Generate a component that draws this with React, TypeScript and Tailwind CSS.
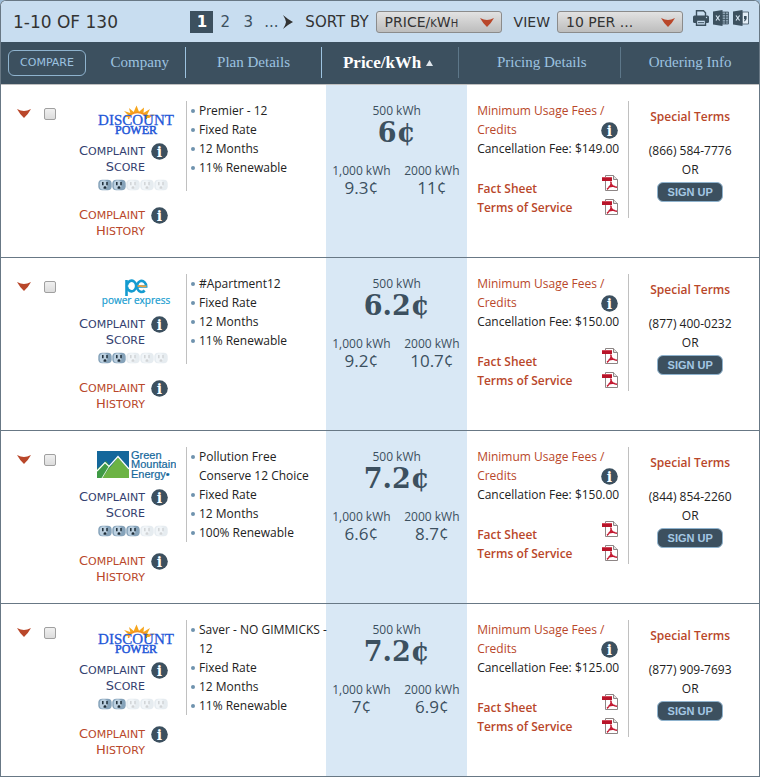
import React, { useState } from 'react';

type Brand = 'discount' | 'express' | 'green';

interface Plan {
  id: string;
  brand: Brand;
  score: number;
  details: string[];
  price500: string;
  price1000: string;
  price2000: string;
  fee: string;
  phone: string;
}

const plans: Plan[] = [
  { id: 'p1', brand: 'discount', score: 2, details: ['Premier - 12', 'Fixed Rate', '12 Months', '11% Renewable'], price500: '6¢', price1000: '9.3¢', price2000: '11¢', fee: '$149.00', phone: '(866) 584-7776' },
  { id: 'p2', brand: 'express', score: 2, details: ['#Apartment12', 'Fixed Rate', '12 Months', '11% Renewable'], price500: '6.2¢', price1000: '9.2¢', price2000: '10.7¢', fee: '$150.00', phone: '(877) 400-0232' },
  { id: 'p3', brand: 'green', score: 3, details: ['Pollution Free Conserve 12 Choice', 'Fixed Rate', '12 Months', '100% Renewable'], price500: '7.2¢', price1000: '6.6¢', price2000: '8.7¢', fee: '$150.00', phone: '(844) 854-2260' },
  { id: 'p4', brand: 'discount', score: 2, details: ['Saver - NO GIMMICKS - 12', 'Fixed Rate', '12 Months', '11% Renewable'], price500: '7.2¢', price1000: '7¢', price2000: '6.9¢', fee: '$125.00', phone: '(877) 909-7693' }
];

const Chevron = ({ className = '' }: { className?: string }) => (
  <svg viewBox="0 0 14 9" className={`w-[14px] h-[9px] ${className}`} aria-hidden="true">
    <path d="M0 0 Q4 2 7 2 Q10 2 14 0 Q11 5.500 7 9 Q3 5.500 0 0Z" fill="#b9472a" />
  </svg>
);

const InfoIcon = () => (
  <svg viewBox="0 0 17 17" className="w-[17px] h-[17px] shrink-0" aria-hidden="true">
    <circle cx="8.500" cy="8.500" r="8.300" fill="#3c505f" />
    <text x="8.500" y="13.500" textAnchor="middle" fontFamily="DejaVu Serif, serif" fontWeight="bold" fontSize="14" fill="#fff">i</text>
  </svg>
);

const PdfIcon = () => (
  <svg viewBox="0 0 16 16" className="w-4 h-4" aria-hidden="true">
    <path d="M3.500 .5h8l4 4v11h-12z" fill="#fff" stroke="#8d8585" />
    <path d="M11.500 .5v4h4" fill="#e4e0e0" stroke="#8d8585" />
    <path d="M0 2h10v4H0z" fill="#b8152a" />
    <path d="M0 2h10v1H0z" fill="#d2495a" />
    <path d="M8.500 6.500C10 8 9 11 5 14.300M9 8.500c.8 2.300 2.800 3.500 6 3.800M6.500 12.200c2-1 4.500-1.200 6.500-.8" fill="none" stroke="#c31830" strokeWidth="1.500" />
  </svg>
);

const Outlet = ({ active }: { active: boolean }) => (
  <svg viewBox="0 0 14 12" className={`w-[14px] h-3 ${active ? '' : 'opacity-20'}`} aria-hidden="true">
    <rect x=".3" y=".8" width="13.400" height="10.400" rx="4" fill="#86a3ba" />
    <rect x="1.800" y="1.200" width="7.500" height="9.600" rx="3.500" fill="#bcd0e0" />
    <path d="M4.800 3v3.200M9 3v3.200" stroke="#1d2c38" strokeWidth="1.500" />
    <path d="M5.600 9.800V8.600a1.400 1.400 0 0 1 2.800 0v1.200z" fill="#1d2c38" />
  </svg>
);

const DiscountLogo = () => (
  <svg viewBox="0 0 80 32" className="w-20 h-8" role="img" aria-label="Discount Power">
    <path d="M27.500 12l5-1.500L28 6l6.300 2L33 3l4.700 4L40.500 .5 43 6.800 48 2.500 47.500 8 54 4 51 10l8-.5-6 3.500z" fill="#f6a51c" />
    <path d="M32.500 14a9 6.500 0 0 1 18 0z" fill="#fff" />
    <path d="M32.500 14a9 6.500 0 0 1 18 0" fill="none" stroke="#f4921e" strokeWidth="1.500" />
    <text x="40" y="20" textAnchor="middle" fontFamily="Liberation Serif, serif" fontSize="15" fill="#1f57d8" stroke="#1f57d8" strokeWidth=".3">DISCOUNT</text>
    <text x="40" y="29" textAnchor="middle" fontFamily="Liberation Serif, serif" fontSize="12" fill="#1f57d8" stroke="#1f57d8" strokeWidth=".5">POWER</text>
  </svg>
);

const ExpressLogo = () => (
  <svg viewBox="0 0 80 32" className="w-20 h-8" role="img" aria-label="Power Express">
    <g fill="none" stroke="#149bd0" strokeWidth="2.600">
      <path d="M30.500 18V2" />
      <path d="M31 7.500a4.600 5.300 0 1 1 0 1" />
      <path d="M41.500 8.500h8.700a4.600 5.500 0 1 0-1.500 4" />
    </g>
    <path d="M41.500 8.300c3-1.600 5 1 9-.3" fill="none" stroke="#f3a33c" strokeWidth="1.800" />
    <text x="40" y="26" textAnchor="middle" fontFamily="Open Sans, sans-serif" fontSize="10" fill="#149bd0" stroke="#149bd0" strokeWidth=".2">power express</text>
  </svg>
);

const GreenLogo = () => (
  <svg viewBox="0 0 80 32" className="w-20 h-8" role="img" aria-label="Green Mountain Energy">
    <rect x="1" y="0" width="32" height="27" fill="#14679b" />
    <path d="M1 18L10 10l8 10v7H1z" fill="#3f9a45" />
    <path d="M6 27L22 6l11 13v8z" fill="#6cb344" />
    <path d="M1 20l8-8.500 4 4L22 5.500 33 18" fill="none" stroke="#fff" strokeWidth="1.200" />
    <path d="M13 15.500L6 27" stroke="#fff" strokeWidth=".8" />
    <g fontFamily="Liberation Sans, sans-serif" fontSize="11" fill="#14679b" stroke="#14679b" strokeWidth=".2">
      <text x="35" y="8">Green</text>
      <text x="35" y="17">Mountain</text>
      <text x="35" y="27">Energy•</text>
    </g>
  </svg>
);

const logos: Record<Brand, React.FC> = {
  discount: DiscountLogo,
  express: ExpressLogo,
  green: GreenLogo
};

const PrintIcon = () => (
  <svg viewBox="0 0 16 16" className="w-4 h-4" aria-hidden="true">
    <path d="M3.500 6V.8h7l2 2V6" fill="#c8ddf0" stroke="#3c505f" strokeWidth="1.400" />
    <rect x="0" y="5.500" width="16" height="7.500" rx="1.500" fill="#3c505f" />
    <path d="M3.500 10h9v5.300h-9z" fill="#c8ddf0" stroke="#3c505f" strokeWidth="1.400" />
    <path d="M5 12.700h6" stroke="#3c505f" />
    <circle cx="13.500" cy="7.500" r=".7" fill="#c8ddf0" />
  </svg>
);

const SheetIcon = ({ csv = false }: { csv?: boolean }) => (
  <svg viewBox="0 0 16 16" className="w-4 h-4" aria-hidden="true">
    <path d="M9 2h6.500v12H9z" fill={csv ? '#e4eef8' : '#8ba0b1'} stroke="#3c505f" strokeWidth=".8" />
    {csv ? (
      <path d="M11 6h2.600v3l-1.600 2.200h-1L11.800 9H11z" fill="#3c505f" />
    ) : (
      <path d="M9 4.500h6.500M9 7h6.500M9 9.500h6.500M9 12h6.500M12.500 2v12" stroke="#3c505f" strokeWidth=".8" />
    )}
    <path d="M0 1.500L9.500 0v16L0 14.500z" fill="#3c505f" />
    <path d="M3 5.500l3.600 5M6.600 5.500L3 10.500" stroke="#d5e4f1" strokeWidth="1.200" />
  </svg>
);

const Dropdown = ({ id, options }: { id: string; options: string[] }) => (
  <div className="relative w-[126px]">
    <select
      id={id}
      className="appearance-none w-full h-[22px] pl-2 pr-8 rounded-[3px] border border-[#8b8b8b] bg-linear-to-b from-[#e2e2e2] to-[#bdbdbd] text-sm leading-5 text-[#333] [font-variant:small-caps]"
    >
      {options.map(option => (
        <option key={option}>{option}</option>
      ))}
    </select>
    <Chevron className="absolute right-2 top-[7px] pointer-events-none" />
  </div>
);

const Toolbar = () => (
  <div className="flex items-center h-[41px] pl-3 pr-[10px] bg-[#c8ddf0] font-['DejaVu_Sans',sans-serif] text-[#333]">
    <span className="text-[17px] leading-5">1-10 OF 130</span>
    <nav className="flex items-center ml-auto text-[15px] leading-5 text-[#3c505f]" aria-label="Pages">
      <a href="#page-1" className="flex items-center justify-center w-[23px] h-[22px] bg-[#3c505f] font-bold text-white">1</a>
      <a href="#page-2" className="w-6 text-center">2</a>
      <a href="#page-3" className="w-[22px] text-center">3</a>
      <span className="w-6 text-center">...</span>
      <a href="#next" aria-label="Next page">
        <svg viewBox="0 0 10 14" className="w-[10px] h-[14px]" aria-hidden="true">
          <path d="M0 0Q5 4.500 10 7Q5 9.500 0 14Q2.800 9.500 3 7Q2.800 4.500 0 0Z" fill="#333" />
        </svg>
      </a>
    </nav>
    <label htmlFor="sort" className="ml-3 mr-[7px] text-[15px] leading-5">SORT BY</label>
    <Dropdown id="sort" options={['PRICE/kWh', 'COMPANY']} />
    <label htmlFor="view" className="ml-3 mr-[7px] text-sm leading-5">VIEW</label>
    <Dropdown id="view" options={['10 PER ...', '20 PER ...']} />
    <div className="flex gap-1 ml-[10px] mb-2">
      <button aria-label="Print"><PrintIcon /></button>
      <button aria-label="Export to Excel"><SheetIcon /></button>
      <button aria-label="Export to CSV"><SheetIcon csv /></button>
    </div>
  </div>
);

// Two stacked words in capitals, each with a larger initial
const CapsLabel = ({ words }: { words: string[] }) => (
  <span className="block text-right text-[11px] leading-4 font-['DejaVu_Sans',sans-serif] uppercase whitespace-nowrap">
    {words.map(word => (
      <span key={word} className="block h-4 first-letter:text-[13px]">{word}</span>
    ))}
  </span>
);

const PlanRow = ({ plan }: { plan: Plan }) => {
  const [open, setOpen] = useState(false);
  const Logo = logos[plan.brand];

  return (
    <tr className="h-[173px] border-b border-[#687885] align-top">
      <td className="pt-[23px] pl-4">
        <div className="flex items-center gap-[13px]">
          <button aria-label="Show details" aria-expanded={open} onClick={() => setOpen(!open)}>
            <Chevron />
          </button>
          <input
            type="checkbox"
            aria-label={`Compare ${plan.details[0]}`}
            className="appearance-none w-3 h-3 rounded-[2px] border border-[#a0a0a0] bg-linear-to-b from-[#f0f0f0] to-[#dcdcdc] checked:bg-[#3c505f]"
          />
        </div>
      </td>

      {/* Company */}
      <td className="pt-5 pr-[18px]">
        <div className="flex flex-col items-end">
          <div className="-mr-2"><Logo /></div>
          <div className="flex gap-[6px] mt-[6px] text-[#33406f]">
            <CapsLabel words={['Complaint', 'Score']} />
            <InfoIcon />
          </div>
          <div className="flex mt-1" role="img" aria-label={`Score ${plan.score} of 5`}>
            {[1, 2, 3, 4, 5].map(n => (
              <Outlet key={n} active={n <= plan.score} />
            ))}
          </div>
          <a href="#history" className="flex gap-[6px] mt-4 text-[#b9472a]">
            <CapsLabel words={['Complaint', 'History']} />
            <InfoIcon />
          </a>
        </div>
      </td>

      {/* Plan details */}
      <td className="pt-4">
        <ul className="min-h-[90px] pl-1 -mr-0.5 border-l border-[#c0c0c0] text-[#222]">
          {plan.details.map(detail => (
            <li key={detail} className="flex gap-1">
              <span className="w-1 h-1 mt-2 rounded-full bg-[#6f93ae] shrink-0" />
              <span>{detail}</span>
            </li>
          ))}
        </ul>
      </td>

      {/* Price */}
      <td className="pt-4 bg-[#d9e8f5] text-center text-[#3c505f]">
        <div>500 kWh</div>
        <div className="font-['DejaVu_Serif',serif] font-bold text-[27px] leading-[26px]">{plan.price500}</div>
        <div className="grid grid-cols-2 mt-[15px]">
          <div>
            <div>1,000 kWh</div>
            <div className="font-medium text-[17px] leading-4">{plan.price1000}</div>
          </div>
          <div>
            <div>2000 kWh</div>
            <div className="font-medium text-[17px] leading-4">{plan.price2000}</div>
          </div>
        </div>
      </td>

      {/* Pricing details */}
      <td className="pt-4">
        <div className="min-h-[117px] px-[10px] border-r border-[#c0c0c0] text-[#b9472a]">
          <a href="#fees" className="flex items-end justify-between">
            <span>Minimum Usage Fees /<br />Credits</span>
            <span className="-ml-5"><InfoIcon /></span>
          </a>
          <div className="text-[#222] whitespace-nowrap">Cancellation Fee: {plan.fee}</div>
          <div className="flex justify-between mt-[17px] font-semibold">
            <div className="flex flex-col pt-1">
              <a href="#facts">Fact Sheet</a>
              <a href="#terms">Terms of Service</a>
            </div>
            <div className="flex flex-col gap-2">
              <a href="#facts-pdf" aria-label="Fact Sheet PDF"><PdfIcon /></a>
              <a href="#terms-pdf" aria-label="Terms of Service PDF"><PdfIcon /></a>
            </div>
          </div>
        </div>
      </td>

      {/* Ordering */}
      <td className="pt-[22px] pr-2 text-center text-[#222]">
        <a href="#special" className="block font-semibold text-[#b9472a]">Special Terms</a>
        <div className="mt-[15px]">{plan.phone}<br />OR</div>
        <button className="w-[66px] h-5 mt-[3px] rounded-md border border-[#8fb3ce] bg-[#3c505f] font-['Liberation_Sans',sans-serif] font-bold text-[11px] leading-4 text-[#a5c8e4]">
          SIGN UP
        </button>
      </td>
    </tr>
  );
};

const heading = 'flex items-center justify-center h-[31px]';

export default function App() {
  return (
    <div className="bg-[#9dbbd6]">
      <div className="rounded-t-md overflow-hidden border border-b-0 border-[#687885] bg-white font-['Open_Sans',sans-serif] text-xs leading-[19px]">
        <Toolbar />
        <table className="w-full table-fixed">
          <colgroup>
            <col className="w-[11.3%]" />
            <col className="w-[13.1%]" />
            <col className="w-[18.5%]" />
            <col className="w-[18.6%]" />
            <col className="w-[21.4%]" />
            <col className="w-[17.1%]" />
          </colgroup>
          <thead>
            <tr className="h-[42px] border-b border-[#c0c0c0] bg-[#3c505f] font-['Liberation_Serif',serif] text-[15px] text-[#9dc3e0]">
              <th className="pl-[7px] text-left font-normal">
                <button className="w-[78px] h-[26px] rounded-md border border-[#8fb3ce] font-['DejaVu_Sans',sans-serif] text-[11px] leading-4">COMPARE</button>
              </th>
              <th className="font-normal"><div className={`${heading} pl-2 border-r border-[#9dc3e0]`}>Company</div></th>
              <th className="pr-1 font-normal"><div className={`${heading} border-r border-[#9dc3e0]`}>Plan Details</div></th>
              <th className="pr-2 font-bold text-[17px] text-white" aria-sort="ascending">
                <div className={`${heading} gap-[5px] pr-2 border-r border-[#5d7789]`}>
                  Price/kWh
                  <svg viewBox="0 0 7 6" className="w-[7px] h-[6px]" aria-hidden="true"><path d="M3.500 0L7 6H0z" fill="#dfe6ec" /></svg>
                </div>
              </th>
              <th className="pr-2 font-normal"><div className={`${heading} pr-1 border-r border-[#5d7789]`}>Pricing Details</div></th>
              <th className="pr-2 font-normal"><div className={heading}>Ordering Info</div></th>
            </tr>
          </thead>
          <tbody>
            {plans.map(plan => (
              <PlanRow key={plan.id} plan={plan} />
            ))}
          </tbody>
        </table>
      </div>
    </div>
  );
}
